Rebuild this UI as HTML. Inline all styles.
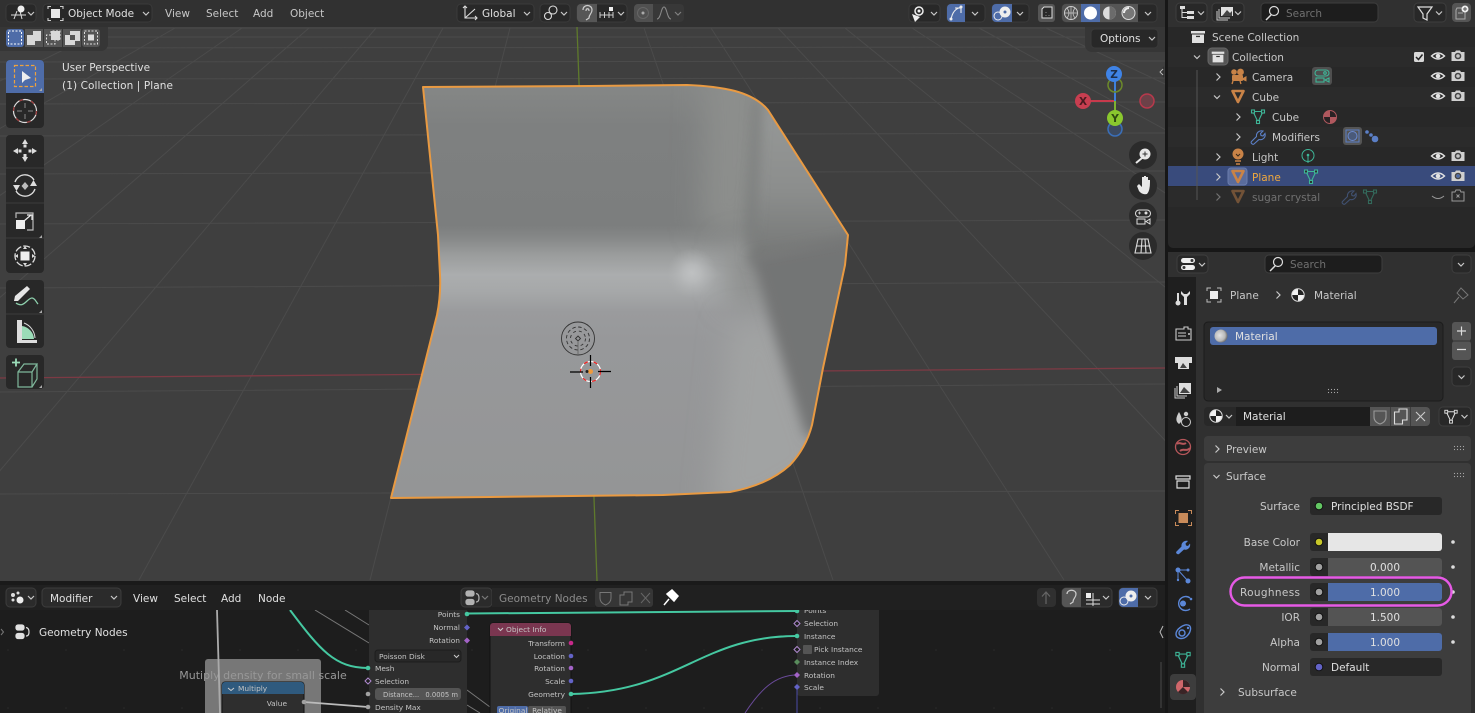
<!DOCTYPE html>
<html><head><meta charset="utf-8"><title>Blender</title>
<style>
html,body{margin:0;padding:0;background:#171717;width:1475px;height:713px;overflow:hidden}
svg{display:block}
text{font-family:"DejaVu Sans","Liberation Sans",sans-serif;font-size:10.5px;fill:#c8c8c8}
.w{fill:#e0e0e0}.d{fill:#8c8c8c}.r{text-anchor:end}.c{text-anchor:middle}
.n{font-size:7.4px;fill:#c4c4c4}
.chev{fill:none;stroke:#c8c8c8;stroke-width:1.2}
</style></head><body>
<svg width="1475" height="713" viewBox="0 0 1475 713" xmlns="http://www.w3.org/2000/svg">
<defs>
<clipPath id="vp"><rect x="0" y="0" width="1165" height="581"/></clipPath>
<clipPath id="ne"><rect x="0" y="610" width="1165" height="103"/></clipPath>
<clipPath id="pl"><path id="plp" d="M423,87 L590,86 L687,85 Q715,86 735,91 Q757,97 768,110 L848,235 L845,265 L823,368 L812,425 Q806,448 790,465 Q768,485 730,492 L663,495 L490,497 L391,498 L437,315 Q441,295 440,275 L438,235 Z"/></clipPath>
<linearGradient id="base" x1="0" y1="86" x2="0" y2="497" gradientUnits="userSpaceOnUse">
<stop offset="0" stop-color="#858786"/><stop offset=".1" stop-color="#7e8080"/><stop offset=".34" stop-color="#7c7e7e"/><stop offset=".37" stop-color="#868888"/><stop offset=".41" stop-color="#9a9c9c"/><stop offset=".46" stop-color="#abadae"/><stop offset=".5" stop-color="#a6a8a9"/><stop offset=".55" stop-color="#9a9b9d"/><stop offset=".62" stop-color="#97989a"/><stop offset="1" stop-color="#949596"/>
</linearGradient>
<linearGradient id="upr" x1="0" y1="105" x2="0" y2="258" gradientUnits="userSpaceOnUse">
<stop offset="0" stop-color="#969897"/><stop offset=".55" stop-color="#8c8e8d"/><stop offset="1" stop-color="#757776"/>
</linearGradient>
<radialGradient id="hl"><stop offset="0" stop-color="#bfc1c2"/><stop offset=".35" stop-color="#bcbebf" stop-opacity=".75"/><stop offset="1" stop-color="#b0b2b3" stop-opacity="0"/></radialGradient>
<filter id="b3" filterUnits="userSpaceOnUse" x="300" y="0" width="700" height="600"><feGaussianBlur stdDeviation="6"/></filter>
<filter id="b6" filterUnits="userSpaceOnUse" x="300" y="0" width="700" height="600"><feGaussianBlur stdDeviation="14"/></filter>
<pattern id="dots" width="58" height="58" patternUnits="userSpaceOnUse" x="6" y="10"><circle cx="2" cy="2" r=".8" fill="#2a2a2a"/></pattern>

<g id="eye"><path d="M-6.5,0Q0,-6 6.5,0Q0,6 -6.5,0Z" fill="none" stroke="#e2e2e2" stroke-width="1.4"/><circle r="2.3" fill="#e2e2e2"/></g>
<g id="cam"><path d="M-6.5,-4H-3L-2,-5.5H2L3,-4H6.5V5H-6.5Z" fill="#d0d0d0"/><circle r="3.3" fill="#444"/><circle r="1.8" fill="#c4c4c4"/></g>
<g id="obj"><path d="M-5.5,-5H5.5L0,6Z" fill="none" stroke="#c98347" stroke-width="2.6" stroke-linejoin="round"/></g>
<g id="mesh" fill="none" stroke="#3eb597" stroke-width="1.1"><path d="M-5,-4.5H5L0,6Z"/><rect x="-6.5" y="-6" width="3" height="3" fill="#282828"/><rect x="3.5" y="-6" width="3" height="3" fill="#282828"/><rect x="-1.5" y="4.500" width="3" height="3" fill="#282828"/></g>
<path id="wrp" d="M-6.5,4.500L-1.500,-.5C-2,-4 1,-7 5,-6L2.500,-3.500L3,-1.500L5,-1L7,-3.500C8,.5 4.500,3.500 1,2.500L-4,7C-5,8 -8,6 -6.500,4.500Z"/>
<g id="wr"><use href="#wrp" fill="none" stroke="#5b7fc6" stroke-width="1.100"/></g>
<g id="mat"><circle r="6.2" fill="#f0f0f0"/><path d="M0,0V-6.2A6.2,6.2 0 0 1 6.2,0ZM0,0V6.2A6.2,6.2 0 0 1 -6.2,0Z" fill="#222"/><circle r="6.2" fill="none" stroke="#ddd"/></g>
<g id="box"><path d="M-7,-6H7V-3.500H-7ZM-6,-2.500H6V6H-6Z" fill="#e0e0e0"/><rect x="-2" y="-1.200" width="4" height="1.300" fill="#333"/></g>
<g id="gn" fill="none" stroke="#e0e0e0" stroke-width="1.2"><rect x="-6" y="-7" width="8" height="5" rx="2" fill="#e0e0e0"/><rect x="-6" y="1.500" width="8" height="5" rx="2" fill="#e0e0e0"/><path d="M4,-4.500Q7,-4 7,0Q7,4 4,4"/></g>
<path id="cd" d="M-3,-1.500L0,1.500L3,-1.500" class="chev"/>
<path id="cr" d="M-1.500,-3.500L2,0L-1.500,3.500" class="chev"/>
<g id="ddots" fill="#aaa"><circle cx="-4.500" cy="-1.500" r=".6"/><circle cx="-1.500" cy="-1.500" r=".6"/><circle cx="1.500" cy="-1.500" r=".6"/><circle cx="4.500" cy="-1.500" r=".6"/><circle cx="-4.500" cy="1.500" r=".6"/><circle cx="-1.500" cy="1.500" r=".6"/><circle cx="1.500" cy="1.500" r=".6"/><circle cx="4.500" cy="1.500" r=".6"/></g>
<radialGradient id="sph" cx=".4" cy=".45" r=".6"><stop offset="0" stop-color="#e4e4e4"/><stop offset=".7" stop-color="#b8b8b8"/><stop offset="1" stop-color="#6a6a6a"/></radialGradient>
</defs>

<!-- ============ VIEWPORT ============ -->
<rect x="0" y="0" width="1165" height="581" fill="#3f3f3f"/>
<g clip-path="url(#vp)">
<g stroke="#4b4b4b" stroke-width="1" fill="none">
<path d="M0,28H1165M0,37H1165M0,48L1165,47M0,62L1165,61M0,79L1165,78M0,104L1165,102M0,136L1165,133M0,174L1165,171M0,224L1165,220M0,288L1165,282M0,392L1165,384M0,494L1165,491"/>
<path d="M-227,28L-2175,580M-160,28L-1944,580M-93,28L-1712,580M-26,28L-1481,580M41,28L-1250,580M108,28L-1018,580M175,28L-787,580M242,28L-556,580M309,28L-324,580M376,28L-93,580M443,28L139,580M510,28L370,580M644,28L833,580M711,28L1064,580M778,28L1296,580M845,28L1527,580M912,28L1759,580M979,28L1990,580M1046,28L2221,580M1113,28L2453,580M1180,28L2684,580M1247,28L2916,580M1314,28L3147,580"/>
</g>
<path d="M0,378L1165,368" stroke="#7d3a44" stroke-width="1.3" fill="none"/>
<path d="M577,27L597,581" stroke="#5f7a2c" stroke-width="1.3" fill="none"/>
</g>

<!-- mesh -->
<g clip-path="url(#pl)">
<rect x="380" y="80" width="480" height="425" fill="url(#base)"/>
<polygon points="705,60 790,60 752,235 700,232" fill="#8c8e8c" filter="url(#b6)"/>
<polygon points="725,245 770,240 770,320 725,300" fill="#8e908f" filter="url(#b6)"/>
<polygon points="730,320 780,320 830,470 760,510 710,510" fill="#a1a3a3" filter="url(#b6)"/>
<polygon points="760,95 900,240 748,262" fill="url(#upr)" filter="url(#b3)"/>
<path d="M757,100L750,245" stroke="#797b7a" stroke-width="7" filter="url(#b3)" fill="none"/>
<polygon points="750,256 900,228 870,440 806,436" fill="#737574" filter="url(#b3)"/>
<circle cx="692" cy="273" r="25" fill="url(#hl)"/>
</g>
<path d="M423,87 L590,86 L687,85 Q715,86 735,91 Q757,97 768,110 L848,235 L845,265 L823,368 L812,425 Q806,448 790,465 Q768,485 730,492 L663,495 L490,497 L391,498 L437,315 Q441,295 440,275 L438,235 Z" fill="none" stroke="#e99a42" stroke-width="2" stroke-linejoin="round"/>

<!-- light & cursor -->
<g fill="none" stroke="#333" stroke-width=".9">
<circle cx="578" cy="338.500" r="16.500"/>
<circle cx="578" cy="338.500" r="11.500" stroke-dasharray="3.500 2.500"/>
<circle cx="578" cy="338.500" r="7.500" stroke-dasharray="3 3"/>
<path d="M578,336L580.500,338.500L578,341L575.500,338.500Z"/>
<path d="M578,341V354" stroke="#666"/>
</g>
<g fill="none">
<circle cx="590.500" cy="371.500" r="10" stroke="#fff" stroke-width="1.2"/>
<circle cx="590.500" cy="371.500" r="10" stroke="#e22" stroke-width="1.2" stroke-dasharray="4 6"/>
<path d="M570,372H583M598,371.500H611M590.500,355V366M590.500,377V388" stroke="#000" stroke-width="1.2"/>
</g>
<circle cx="590.500" cy="371.500" r="2.500" fill="#ef9a3c"/>
<circle cx="587" cy="371.500" r="1.500" fill="#222"/>

<!-- top bar -->
<rect x="0" y="0" width="1165" height="27" fill="#313131"/>
<g fill="#282828" stroke="#3a3a3a">
<rect x="6" y="4" width="30" height="18" rx="4"/>
<rect x="43" y="4" width="109" height="18" rx="4"/>
<rect x="457" y="4" width="77" height="18" rx="4"/>
<rect x="540" y="4" width="30" height="18" rx="4"/>
<rect x="577" y="4" width="50" height="18" rx="4"/>
<rect x="909" y="4" width="31" height="18" rx="4"/>
<rect x="947" y="4" width="38" height="18" rx="4"/>
<rect x="992" y="4" width="37" height="18" rx="4"/>
<rect x="1062" y="4" width="95" height="18" rx="4"/>
</g>
<rect x="634" y="4" width="50" height="18" rx="4" fill="#383838"/>
<!-- editor type icon -->
<g fill="none" stroke="#ddd"><path d="M11,15H26M14,19L17,11M22,19L20,11"/></g><circle cx="21" cy="9" r="3.500" fill="#eee"/>
<use href="#cd" x="31" y="13.500"/>
<!-- mode icon -->
<rect x="51" y="9" width="9" height="9" fill="#e8e8e8"/><path d="M48,9V6.500H51M60,6.500H63V9M63,18V20.500H60M51,20.500H48V18" fill="none" stroke="#ccc" stroke-width="1.1"/>
<text x="68" y="17" class="w">Object Mode</text><use href="#cd" x="146" y="13.500"/>
<text x="165" y="17">View</text><text x="206" y="17">Select</text><text x="253" y="17">Add</text><text x="290" y="17">Object</text>
<!-- global -->
<g fill="none" stroke="#ddd" stroke-width="1.1"><path d="M465,6V18H477M465,18L475,9M463,8L465,6L467,8M475,16L477,18L475,20"/></g>
<text x="482" y="17" class="w">Global</text><use href="#cd" x="527" y="13.500"/>
<g fill="none" stroke="#ddd" stroke-width="1.1"><circle cx="548" cy="16" r="3.500"/><circle cx="553" cy="10" r="4"/></g><use href="#cd" x="564" y="13.500"/>
<path d="M577,8a4,4 0 0 1 4,-4H597V22H581a4,4 0 0 1 -4,-4Z" fill="#565656"/>
<path d="M583,10C583,4 592,4 592,10C592,14 589,14 589,18L586,20M586,11C586,8 589,8 589,11" fill="none" stroke="#ccc" stroke-width="1.2"/>
<path d="M600,15H613M600,12V18M604.500,12V18M609,12V18M613,12V18" stroke="#ccc" fill="none"/><rect x="609" y="7" width="4" height="4" fill="#eee"/>
<use href="#cd" x="621" y="13.500"/>
<path d="M634,8a4,4 0 0 1 4,-4H653V22H638a4,4 0 0 1 -4,-4Z" fill="#505050"/>
<circle cx="643" cy="13" r="5.500" fill="none" stroke="#666"/><circle cx="643" cy="13" r="1.500" fill="#aaa"/>
<path d="M657,19C661,19 661,7 664,7C667,7 667,19 671,19" fill="none" stroke="#8a8a8a"/><use href="#cd" x="678" y="13.500" opacity=".5"/>
<!-- right header -->
<circle cx="919" cy="11" r="4" fill="none" stroke="#eee" stroke-width="1.5"/><circle cx="919" cy="11" r="1.500" fill="#eee"/><path d="M912,14L920,17L915,22Z" fill="#eee"/><use href="#cd" x="934" y="13.500"/>
<path d="M947,8a4,4 0 0 1 4,-4H965V22H951a4,4 0 0 1 -4,-4Z" fill="#4e6ca8"/>
<path d="M951,20C952,12 956,8 962,7M955,8H961V13" fill="none" stroke="#eee" stroke-width="1.1"/><circle cx="951" cy="19" r="1.500" fill="#eee"/><circle cx="961" cy="7" r="1.500" fill="#eee"/><use href="#cd" x="975" y="13.500"/>
<path d="M992,8a4,4 0 0 1 4,-4H1012V22H996a4,4 0 0 1 -4,-4Z" fill="#4e6ca8"/>
<circle cx="1005" cy="12" r="5.500" fill="#eee"/><circle cx="998" cy="16" r="4" fill="none" stroke="#eee"/><circle cx="1005" cy="12" r="1.500" fill="#4e6ca8"/><use href="#cd" x="1020" y="13.500"/>
<rect x="1038" y="4" width="17" height="18" rx="3" fill="#555"/><path d="M1044,7H1052V18H1042V9Z" fill="#2a2a2a" stroke="#ddd"/><path d="M1046,12v.5M1046,15v.5M1049,15v.5" stroke="#eee"/>
<path d="M1062,8a4,4 0 0 1 4,-4H1081V22H1066a4,4 0 0 1 -4,-4Z" fill="#505050"/>
<rect x="1081" y="4" width="19" height="18" fill="#4e6ca8"/>
<rect x="1100" y="4" width="19" height="18" fill="#555"/><rect x="1119" y="4" width="19" height="18" fill="#555"/>
<circle cx="1071" cy="13" r="6.500" fill="none" stroke="#ccc"/><path d="M1064.500,13H1077.500M1071,6.500V19.500M1067,8Q1071,13 1067,18M1075,8Q1071,13 1075,18" stroke="#ccc" fill="none" stroke-width=".7"/>
<circle cx="1090.500" cy="13" r="6.500" fill="#fff"/>
<circle cx="1109.500" cy="13" r="6.500" fill="#ddd"/><path d="M1109.500,13V6.500A6.500,6.500 0 0 1 1116,13A6.500,6.500 0 0 1 1109.500,19.500Z" fill="#6b6b6b"/>
<circle cx="1128.500" cy="13" r="6.500" fill="#777" stroke="#ddd"/><path d="M1124,13a5,5 0 0 1 5,-5" stroke="#eee" fill="none" stroke-width="2"/>
<use href="#cd" x="1148" y="13.500"/>

<!-- select mode strip -->
<path d="M0,27H108V44a7,7 0 0 1 -7,7H0Z" fill="#363636"/>
<rect x="6" y="29" width="18" height="18" rx="3" fill="#4e6ca8"/><rect x="25" y="29" width="18" height="18" fill="#555"/><rect x="44" y="29" width="18" height="18" fill="#555"/><rect x="63" y="29" width="18" height="18" fill="#555"/><rect x="82" y="29" width="18" height="18" rx="3" fill="#555"/>
<rect x="8.500" y="31" width="13" height="13" fill="none" stroke="#fff" stroke-dasharray="2 1.500"/>
<path d="M27,35H33V31H41V41H35V45H27Z" fill="#d8d8d8"/>
<path d="M51,35H46.500V44H55V40H60V31H51Z" fill="none" stroke="#e0e0e0" stroke-dasharray="2 1.500"/><rect x="51" y="31" width="9" height="9" fill="#d8d8d8"/>
<path d="M65,35H70V31H80V41H75V45H65Z" fill="#d8d8d8"/><rect x="70" y="35" width="5" height="5" fill="#555"/>
<rect x="84.500" y="31" width="13" height="13" fill="none" stroke="#ddd" stroke-dasharray="2 1.500"/><rect x="88" y="34.500" width="6" height="6" fill="#ddd"/>

<!-- options -->
<path d="M1085,27H1165V52H1092a7,7 0 0 1 -7,-7Z" fill="#363636"/>
<rect x="1091" y="29" width="67" height="19" rx="4" fill="#282828" stroke="#3a3a3a"/>
<text x="1100" y="42" class="w">Options</text><use href="#cd" x="1152" y="38.500"/>

<!-- overlay text -->
<text x="62" y="71" class="w">User Perspective</text>
<text x="62" y="89" class="w" textLength="111">(1) Collection | Plane</text>

<!-- toolbar -->
<rect x="6" y="60" width="38" height="68" rx="4" fill="#282828"/>
<path d="M6,93V64a4,4 0 0 1 4,-4H40a4,4 0 0 1 4,4V93Z" fill="#4e6ca8"/>
<rect x="6" y="135" width="38" height="138" rx="4" fill="#282828"/>
<rect x="6" y="280" width="38" height="68" rx="4" fill="#282828"/>
<rect x="6" y="355" width="38" height="34" rx="4" fill="#282828"/>
<path d="M6,168H44M6,203H44M6,238H44M6,314H44" stroke="#3d3d3d"/>
<path d="M44,89V92H41Z M44,236V239H41Z M44,311V314H41Z M44,386V389H41Z" fill="#aaa" transform="translate(-2,-1)"/>
<rect x="14.500" y="65.500" width="21" height="21" fill="none" stroke="#eda23f" stroke-width="1.200" stroke-dasharray="3.500 2"/>
<path d="M22,71V83L25,80L31,78Z" fill="#eee"/>
<circle cx="25" cy="111" r="11.500" fill="none" stroke="#ddd" stroke-width="1.200"/><circle cx="25" cy="111" r="11.500" fill="none" stroke="#9c3a3a" stroke-width="1.200" stroke-dasharray="4 8"/>
<path d="M25,103V108M25,114V119M17,111H22M28,111H33" stroke="#888" fill="none"/>
<g fill="#ddd"><path d="M25,139L28,144H22ZM25,162L28,157H22ZM13,151L18,148V154ZM37,151L32,148V154Z"/><rect x="23.500" y="144.500" width="3" height="3"/><rect x="23.500" y="154" width="3" height="3"/><rect x="18.500" y="149.500" width="3" height="3"/><rect x="28.500" y="149.500" width="3" height="3"/></g>
<path d="M15,182A10.500,10.500 0 0 1 34,180M35,189A10.500,10.500 0 0 1 16,191" fill="none" stroke="#ddd" stroke-width="1.300"/><path d="M13,185H20L16.500,191ZM30,186H37L33.500,180Z" fill="#ddd"/><path d="M25,182L28.500,186L25,190L21.500,186Z" fill="#bbb"/>
<rect x="16" y="220" width="9" height="9" fill="#eee"/><path d="M16,218V213H33V230H27" fill="none" stroke="#bbb" stroke-width="1.200"/><path d="M24,221L31,215M27,215H32V220" fill="none" stroke="#eee" stroke-width="1.200"/>
<circle cx="25" cy="256" r="10" fill="none" stroke="#ddd" stroke-width="1.300" stroke-dasharray="7 2"/><rect x="20.500" y="251.500" width="9" height="9" fill="#eee"/><path d="M25,246L27,249H23ZM25,266L27,263H23ZM15,256L18,254V258ZM35,256L32,254V258Z" fill="#ddd"/>
<path d="M14,301L15,296L27,286L30,289L18,301Z" fill="#e6e6e6"/><path d="M16,303C24,309 27,298 32,298C35,298 36,302 38,304" fill="none" stroke="#8ed0ad" stroke-width="1.300"/>
<path d="M17,320H22V340H37V343H17Z" fill="#ddd"/><path d="M22,326A14,14 0 0 1 34,339H22Z" fill="#9bdcb8"/><path d="M24,323A17,17 0 0 1 35,338" fill="none" stroke="#ddd"/>
<path d="M18,372H32V387H18ZM18,372L24,364H37L32,372M37,364V379L32,387" fill="none" stroke="#7fb79b" stroke-width="1.200"/>
<path d="M12,362.500H20M16,358.500V366.500" stroke="#9bdcb8" stroke-width="1.800" fill="none"/>

<!-- gizmo -->
<path d="M1115,101H1087" stroke="#c83a4c" stroke-width="2"/><path d="M1115,101V78" stroke="#3f7fdc" stroke-width="2"/><path d="M1115,101V112" stroke="#7fb22f" stroke-width="2"/>
<circle cx="1115" cy="85" r="7" fill="none" stroke="#6c8a2a" stroke-width="1.500"/>
<circle cx="1115" cy="129" r="7" fill="#3c4a60" stroke="#3a6fb9" stroke-width="1.500"/>
<circle cx="1147" cy="101" r="7" fill="#6c4148" stroke="#b8394c" stroke-width="1.500"/>
<circle cx="1114" cy="74" r="8" fill="#3f83e6"/><circle cx="1083" cy="101" r="8" fill="#c83e50"/><circle cx="1115" cy="118" r="8" fill="#8ac82e"/>
<text x="1114" y="78" class="c" style="fill:#1c2e4c;font-weight:bold">Z</text><text x="1083" y="105" class="c" style="fill:#4a1a20;font-weight:bold">X</text><text x="1115" y="122" class="c" style="fill:#2e4a10;font-weight:bold">Y</text>
<!-- nav btns -->
<g fill="#2b2b2b"><circle cx="1143" cy="155" r="14"/><circle cx="1143" cy="186" r="14"/><circle cx="1143" cy="216" r="14"/><circle cx="1143" cy="246" r="14"/></g>
<circle cx="1145" cy="154" r="5.500" fill="#e8e8e8"/><path d="M1142,158L1136,163" stroke="#e8e8e8" stroke-width="2"/><path d="M1142.500,154H1147.500M1145,151.500V156.500" stroke="#333"/>
<path d="M1137,186L1139,191Q1142,195 1147,194Q1150,191 1150,182V180H1148V186V177H1146V185V176H1144V185V177H1142V187L1139,184Z" fill="#e8e8e8"/>
<rect x="1135.500" y="210" width="15" height="7" rx="3.500" fill="none" stroke="#ddd"/><circle cx="1146" cy="213" r="1.500" fill="#ddd"/><path d="M1138,213H1141M1139.500,211.500V214.500" stroke="#ddd" stroke-width=".8"/><rect x="1137" y="219" width="8" height="5" fill="none" stroke="#ddd"/><path d="M1146,221.500L1150,219V224Z" fill="none" stroke="#ddd"/>
<path d="M1138,239H1148L1151,253H1135ZM1136.500,246H1149.500M1142,239L1141,253M1145,239L1146,253" fill="none" stroke="#ddd" stroke-width="1.100"/>
<path d="M1164,66L1159,72L1164,78Z" fill="#333"/><path d="M1163,69L1160,72L1163,75" fill="none" stroke="#bbb"/>

<!-- ============ SEPARATOR ============ -->
<rect x="0" y="581" width="1165" height="4" fill="#1a1a1a"/>

<!-- ============ NODE EDITOR ============ -->
<rect x="0" y="585" width="1165" height="128" fill="#1d1d1d"/>
<rect x="0" y="610" width="1165" height="103" fill="url(#dots)"/>
<rect x="0" y="585" width="1165" height="25" fill="#202020"/>
<g clip-path="url(#ne)">
<!-- frame -->
<rect x="205" y="659" width="116" height="60" rx="3" fill="#777"/>
<text x="263" y="679" class="c" style="font-size:11px;fill:#989898">Mutiply density for small scale</text>
<!-- faint wires -->
<path d="M315,610L369,643M345,610L369,625M467,705L480,713M467,690L490,707" stroke="#777" fill="none"/>
<path d="M217,610L220,713" stroke="#aaa" stroke-width="1.800" fill="none"/>
<!-- multiply -->
<rect x="222" y="682" width="82" height="40" rx="3" fill="#2e2e2e" stroke="#111"/>
<path d="M222,685a3,3 0 0 1 3,-3H301a3,3 0 0 1 3,3V694H222Z" fill="#2f5a7e"/>
<path d="M228,688L231,690.500L234,688" fill="none" stroke="#ccc"/><text x="238" y="691" class="n">Multiply</text>
<text x="287" y="706" class="n r">Value</text>
<path d="M304,702L368,707" stroke="#bbb" stroke-width="1.800"/><circle cx="304" cy="702" r="2.300" fill="#a1a1a1"/>
<path d="M290,610C320,650 335,668 368,668" stroke="#45c8a1" stroke-width="2" fill="none"/>
<!-- distribute node -->
<rect x="369" y="600" width="98" height="120" rx="3" fill="#2e2e2e"/>
<text x="460" y="617" class="n r">Points</text><text x="460" y="630" class="n r">Normal</text><text x="460" y="643" class="n r">Rotation</text>
<rect x="375" y="650" width="86" height="12" rx="3" fill="#282828" stroke="#1d1d1d"/><text x="379" y="659" class="n">Poisson Disk</text><path d="M454,655L456.500,657.500L459,655" fill="none" stroke="#ccc"/>
<text x="375" y="671" class="n">Mesh</text><text x="375" y="684" class="n">Selection</text>
<rect x="375" y="688" width="86" height="12" rx="3" fill="#545454"/><text x="383" y="697" class="n" style="font-size:6.800px">Distance...</text><text x="458" y="697" class="n r" style="font-size:6.800px">0.0005 m</text>
<text x="375" y="710" class="n">Density Max</text>
<path d="M467,613.500C600,612.500 700,611.500 797,611" stroke="#45c8a1" stroke-width="2" fill="none"/>
<circle cx="467" cy="614" r="2.300" fill="#45c8a1"/><path d="M467,624.500L470,627.500L467,630.500L464,627.500Z" fill="#6363c7"/><path d="M467,637.500L470,640.500L467,643.500L464,640.500Z" fill="#a363c7"/>
<circle cx="368" cy="668" r="2.300" fill="#45c8a1"/><path d="M368,678L371,681L368,684L365,681Z" fill="#1d1d1d" stroke="#b08ad0"/><circle cx="368" cy="694" r="2.300" fill="#a1a1a1"/><circle cx="368" cy="707" r="2.300" fill="#a1a1a1"/>
<!-- object info -->
<rect x="490" y="623" width="81" height="95" rx="3" fill="#2e2e2e" stroke="#111"/>
<path d="M490,626a3,3 0 0 1 3,-3H568a3,3 0 0 1 3,3V636H490Z" fill="#7a3650"/>
<path d="M498,628L500.500,630.500L503,628" fill="none" stroke="#ccc"/><text x="506" y="632" class="n">Object Info</text>
<text x="565" y="646" class="n r">Transform</text><text x="565" y="659" class="n r">Location</text><text x="565" y="671" class="n r">Rotation</text><text x="565" y="684" class="n r">Scale</text><text x="565" y="697" class="n r">Geometry</text>
<circle cx="571" cy="643" r="2.300" fill="#c7298a"/><circle cx="571" cy="656" r="2.300" fill="#6363c7"/><circle cx="571" cy="668" r="2.300" fill="#a363c7"/><circle cx="571" cy="681" r="2.300" fill="#6363c7"/>
<path d="M571,694C680,692 700,636 797,636" stroke="#45c8a1" stroke-width="2" fill="none"/><circle cx="571" cy="694" r="2.300" fill="#45c8a1"/>
<rect x="497" y="706" width="31" height="12" rx="2" fill="#4e6ca8"/><rect x="528" y="706" width="38" height="12" rx="2" fill="#545454"/>
<text x="513" y="713" class="n c">Original</text><text x="547" y="713" class="n c">Relative</text>
<!-- instance node -->
<rect x="797" y="600" width="82" height="96" rx="3" fill="#2e2e2e"/>
<text x="804" y="613" class="n">Points</text><text x="804" y="626" class="n">Selection</text><text x="804" y="639" class="n">Instance</text>
<rect x="803" y="645" width="9" height="9" rx="1" fill="#545454"/><text x="814" y="652" class="n">Pick Instance</text>
<text x="804" y="665" class="n">Instance Index</text><text x="804" y="678" class="n">Rotation</text><text x="804" y="690" class="n">Scale</text>
<path d="M797,675C775,675 760,690 745,713" stroke="#6a4a9a" fill="none"/><path d="M797,687V713" stroke="#4a4aa8" fill="none"/>
<circle cx="797" cy="611" r="2.300" fill="#45c8a1"/><path d="M797,620.500L800,623.500L797,626.500L794,623.500Z" fill="#1d1d1d" stroke="#b08ad0"/><circle cx="797" cy="636" r="2.300" fill="#45c8a1"/><path d="M797,646.500L800,649.500L797,652.500L794,649.500Z" fill="#1d1d1d" stroke="#b08ad0"/><path d="M797,659L800,662L797,665L794,662Z" fill="#598c5c"/><path d="M797,672L800,675L797,678L794,675Z" fill="#a363c7"/><path d="M797,684L800,687L797,690L794,687Z" fill="#6363c7"/>
</g>
<rect x="1160" y="662" width="2" height="46" fill="#333"/>
<path d="M1163,626L1160,632L1163,638" fill="none" stroke="#bbb"/>
<path d="M1,629L3.500,632L1,635" fill="none" stroke="#777"/>
<use href="#gn" x="22" y="632"/>
<text x="39" y="636" class="w">Geometry Nodes</text>

<!-- node header -->
<g fill="#2b2b2b" stroke="#3d3d3d">
<rect x="6" y="588" width="30" height="19" rx="4"/>
<rect x="42" y="588" width="79" height="19" rx="4"/>
<rect x="461" y="588" width="31" height="19" rx="4"/>
<rect x="1062" y="588" width="50" height="19" rx="4"/>
<rect x="1119" y="588" width="38" height="19" rx="4"/>
</g>
<circle cx="13" cy="595" r="2" fill="#ddd"/><circle cx="18" cy="593" r="1.500" fill="#ddd"/><circle cx="20" cy="600" r="3.500" fill="#eee"/><circle cx="13" cy="600" r="1.500" fill="#ddd"/><use href="#cd" x="31" y="597.500"/>
<text x="50" y="602" class="w">Modifier</text><use href="#cd" x="114" y="597.500"/>
<text x="133" y="602" class="w">View</text><text x="174" y="602" class="w">Select</text><text x="221" y="602" class="w">Add</text><text x="258" y="602" class="w">Node</text>
<use href="#gn" x="472" y="598" opacity=".75"/><use href="#cd" x="485" y="597.500" opacity=".5"/>
<rect x="492" y="588" width="103" height="19" fill="#262626"/><text x="499" y="602" class="d">Geometry Nodes</text>
<rect x="595" y="588" width="58" height="19" rx="3" fill="#363636"/>
<path d="M600,592.500H611V598C611,602 608,604 605.500,605C603,604 600,602 600,598Z" fill="none" stroke="#777"/>
<path d="M620,595H624V592H632V602H628V605H620Z" fill="none" stroke="#777"/>
<path d="M641,593L650,603M650,593L641,603" stroke="#666"/>
<path d="M664,605L669,599M667,594L672,590L678,596L674,601Z" fill="#fff" stroke="#fff" stroke-width="1.500"/>
<rect x="1037" y="588" width="19" height="19" rx="4" fill="#303030"/><path d="M1046,604V593M1042,596.500L1046,592L1050,596.500" fill="none" stroke="#666" stroke-width="1.200"/>
<path d="M1062,592a4,4 0 0 1 4,-4H1081V607H1066a4,4 0 0 1 -4,-4Z" fill="#565656"/>
<path d="M1067,594C1067,589 1076,589 1076,594C1076,598 1073,598 1073,602L1070,604" fill="none" stroke="#ccc" stroke-width="1.200"/>
<path d="M1086,600H1100M1093,593V606M1086,604H1100" stroke="#ddd" fill="none"/><rect x="1086" y="593" width="5" height="5" fill="#eee"/><use href="#cd" x="1106" y="597.500"/>
<path d="M1119,592a4,4 0 0 1 4,-4H1138V607H1123a4,4 0 0 1 -4,-4Z" fill="#4e6ca8"/>
<circle cx="1131" cy="596" r="5.500" fill="#eee"/><circle cx="1124" cy="601" r="4" fill="none" stroke="#eee"/><circle cx="1131" cy="596" r="1.500" fill="#4e6ca8"/><use href="#cd" x="1148" y="597.500"/>

<!-- ============ OUTLINER ============ -->
<rect x="1165" y="0" width="310" height="713" fill="#171717"/>
<path d="M1168,0H1475V243a5,5 0 0 1 -5,5H1173a5,5 0 0 1 -5,-5Z" fill="#282828"/>
<rect x="1168" y="0" width="307" height="27" fill="#303030"/>
<g fill="#2b2b2b"><rect x="1168" y="47" width="307" height="20"/><rect x="1168" y="87" width="307" height="20"/><rect x="1168" y="127" width="307" height="20"/><rect x="1168" y="187" width="307" height="20"/></g>
<rect x="1168" y="166" width="307" height="20" fill="#394b7c"/>
<g fill="#282828" stroke="#3e3e3e"><rect x="1176" y="3" width="31" height="19" rx="4"/><rect x="1212" y="3" width="32" height="19" rx="4"/><rect x="1414" y="3" width="32" height="19" rx="4"/></g>
<rect x="1261" y="3" width="117" height="19" rx="4" fill="#1d1d1d" stroke="#3e3e3e"/>
<rect x="1452" y="3" width="19" height="19" rx="4" fill="#555"/>
<g fill="#ddd"><rect x="1180" y="6" width="5" height="3"/><rect x="1187" y="11" width="7" height="3"/><rect x="1187" y="16" width="7" height="3"/></g><path d="M1182,9V17.500H1187M1182,12.500H1187" stroke="#ddd" fill="none"/><use href="#cd" x="1201" y="13"/>
<rect x="1221" y="7" width="12" height="9" fill="#e0e0e0"/><path d="M1223,15L1227,10L1230,13L1232,11V16H1222Z" fill="#444"/><path d="M1219,9V18H1230M1217,11V20H1228" stroke="#ccc" fill="none"/><use href="#cd" x="1238" y="13"/>
<circle cx="1274" cy="11" r="4.500" fill="none" stroke="#ddd" stroke-width="1.200"/><path d="M1271,15L1266,20" stroke="#ddd" stroke-width="1.500"/>
<text x="1286" y="17" class="d" style="fill:#707070">Search</text>
<path d="M1418,7H1432L1427,14V20L1423,18V14Z" fill="none" stroke="#ddd" stroke-width="1.200"/><use href="#cd" x="1439" y="13"/>
<path d="M1457,8H1465V19H1456V10Z" fill="none" stroke="#aaa"/><path d="M1458,13H1463" stroke="#aaa"/><circle cx="1465" cy="9" r="3.500" fill="#eee"/><path d="M1463,9H1467M1465,7V11" stroke="#555"/>

<use href="#box" x="1198" y="37"/>
<text x="1212" y="41">Scene Collection</text>
<use href="#cd" x="1197" y="57"/>
<rect x="1208" y="48" width="20" height="17" rx="4" fill="#555" stroke="#666"/>
<use href="#box" x="1218" y="57" transform="translate(121.800,5.700) scale(.9)" />
<text x="1232" y="61">Collection</text>
<path d="M1197,70V200" stroke="#555"/>
<rect x="1414" y="52" width="10" height="10" rx="1.500" fill="#d8d8d8"/><path d="M1416,57L1418.500,59.500L1422.500,54.500" fill="none" stroke="#222" stroke-width="1.500"/>
<use href="#cr" x="1218" y="77"/>
<g fill="#c98347"><circle cx="1234" cy="72" r="2.800"/><circle cx="1240.500" cy="72" r="3.400"/><rect x="1232" y="75" width="11" height="6" rx="1"/><path d="M1243,78L1246.500,76V81.500L1243,80Z"/></g><path d="M1233,81L1232,84M1240,81L1241,84" stroke="#c98347" stroke-width="1.300"/>
<text x="1252" y="81">Camera</text>
<rect x="1312" y="67" width="20" height="18" rx="3" fill="#4f4f4f"/>
<g fill="none" stroke="#3eb597" stroke-width="1.100"><rect x="1315" y="70" width="14" height="6" rx="3"/><circle cx="1325" cy="73" r="1.300"/><rect x="1316" y="78" width="8" height="4"/><path d="M1325,80L1329,78V82Z"/></g>
<use href="#cd" x="1217" y="97"/><use href="#obj" x="1238" y="96"/>
<text x="1252" y="101">Cube</text>
<use href="#cr" x="1238" y="117"/><use href="#mesh" x="1258" y="116"/>
<text x="1272" y="121">Cube</text>
<circle cx="1330" cy="117" r="6.500" fill="#b0585e"/><path d="M1330,117V110.500A6.500,6.500 0 0 1 1336.500,117ZM1330,117V123.500A6.500,6.500 0 0 1 1323.500,117Z" fill="#2a2224"/><circle cx="1330" cy="117" r="6.500" fill="none" stroke="#b0585e"/>
<use href="#cr" x="1238" y="137"/><use href="#wr" x="1258" y="137"/>
<text x="1272" y="141">Modifiers</text>
<rect x="1343" y="127" width="19" height="18" rx="3" fill="#555"/><rect x="1346" y="130" width="13" height="12" fill="none" stroke="#5b7fc6"/><circle cx="1352.500" cy="136" r="4.500" fill="#4a5a7a" stroke="#6a8ad0"/>
<g fill="#5b7fc6"><circle cx="1367" cy="132" r="1.800"/><circle cx="1371" cy="135" r="1.800"/><circle cx="1375" cy="139" r="3.300"/></g>
<use href="#cr" x="1218" y="157"/>
<circle cx="1238" cy="154" r="5.500" fill="#c98347"/><path d="M1235,161H1241M1236,164H1240" stroke="#c98347" stroke-width="1.500"/><path d="M1236,154L1238,156L1240,154" stroke="#3a2a1a" fill="none"/>
<text x="1252" y="161">Light</text>
<circle cx="1308" cy="155.500" r="6" fill="none" stroke="#3eb597"/><circle cx="1308" cy="155" r="1.300" fill="#3eb597"/><path d="M1308,156V163" stroke="#3eb597"/>
<use href="#cr" x="1218" y="177"/>
<rect x="1228" y="168" width="19" height="17" rx="3" fill="#5a6c9c" stroke="#6a7cac"/><use href="#obj" x="1238" y="176"/>
<text x="1252" y="181" style="fill:#f0a83e">Plane</text>
<use href="#mesh" x="1311" y="176"/>
<g opacity=".45"><use href="#cr" x="1218" y="197"/><use href="#obj" x="1238" y="196"/><use href="#wr" x="1349" y="197"/><use href="#mesh" x="1370" y="196"/></g>
<text x="1252" y="201" style="fill:#717171">sugar crystal</text>
<use href="#eye" x="1438" y="56"/><use href="#cam" x="1458" y="56"/>
<use href="#eye" x="1438" y="76"/><use href="#cam" x="1458" y="76"/>
<use href="#eye" x="1438" y="96"/><use href="#cam" x="1458" y="96"/>
<use href="#eye" x="1438" y="156"/><use href="#cam" x="1458" y="156"/>
<use href="#eye" x="1438" y="176"/><use href="#cam" x="1458" y="176"/>
<circle cx="1458" cy="176" r="1.800" fill="#4e6ca8"/>
<path d="M1432,196Q1438,201 1444,196" fill="none" stroke="#999"/>
<path d="M1452,192H1455L1456,190H1460L1461,192H1464V201H1452Z" fill="none" stroke="#999"/><path d="M1456.500,194.500L1459.500,197.500M1459.500,194.500L1456.500,197.500" stroke="#999"/>

<!-- ============ PROPERTIES ============ -->
<path d="M1168,252H1475V713H1168Z" fill="#303030"/>
<rect x="1168" y="277" width="28" height="436" fill="#1f1f1f"/>
<g fill="#282828" stroke="#3e3e3e"><rect x="1177" y="255" width="31" height="18" rx="4"/><rect x="1452" y="255" width="19" height="18" rx="4"/></g>
<rect x="1265" y="255" width="117" height="18" rx="4" fill="#1d1d1d" stroke="#3e3e3e"/>
<rect x="1181" y="258" width="14" height="5" rx="2.500" fill="#eee"/><rect x="1181" y="265" width="14" height="5" rx="2.500" fill="#eee"/><circle cx="1192" cy="260.500" r="1.500" fill="#333"/><circle cx="1184" cy="267.500" r="1.500" fill="#333"/><use href="#cd" x="1202" y="264.500"/>
<circle cx="1278" cy="262" r="4.500" fill="none" stroke="#ddd" stroke-width="1.200"/><path d="M1275,266L1270,271" stroke="#ddd" stroke-width="1.500"/>
<text x="1290" y="268" style="fill:#707070">Search</text>
<use href="#cd" x="1461" y="264.500"/>
<!-- breadcrumb -->
<rect x="1210" y="291" width="8" height="8" fill="#eee"/><path d="M1207,291V288H1211M1217,288H1221V291M1221,299V302H1217M1211,302H1207V299" fill="none" stroke="#bbb"/>
<text x="1230" y="299">Plane</text><use href="#cr" x="1278" y="295"/><use href="#mat" x="1298" y="295"/>
<text x="1314" y="299">Material</text>
<path d="M1454,303L1459,297M1457,293L1461,288L1468,295L1463,299Z" fill="none" stroke="#777"/>
<!-- list -->
<rect x="1204" y="322" width="239" height="79" rx="4" fill="#282828" stroke="#1c1c1c"/>
<rect x="1210" y="327" width="227" height="18" rx="3" fill="#4e6ca8"/>
<circle cx="1221" cy="336" r="6.500" fill="url(#sph)"/>
<text x="1235" y="340" class="w">Material</text>
<path d="M1217,387V393L1222,390Z" fill="#aaa"/><use href="#ddots" x="1333" y="391"/>
<rect x="1452" y="322" width="19" height="19" rx="3" fill="#555"/><rect x="1452" y="341" width="19" height="19" rx="3" fill="#555"/>
<path d="M1457,331H1466M1461.500,326.500V335.500M1457,349.500H1466" stroke="#ddd" stroke-width="1.200" fill="none"/>
<path d="M1452,341H1471" stroke="#333"/>
<rect x="1452" y="367" width="19" height="19" rx="4" fill="#282828" stroke="#3e3e3e"/><use href="#cd" x="1461.500" y="377"/>
<!-- material selector -->
<path d="M1208,407H1236V426H1208a4,4 0 0 1 -4,-4V411a4,4 0 0 1 4,-4Z" fill="#282828"/>
<use href="#mat" x="1216" y="416"/><use href="#cd" x="1229" y="416.500"/>
<rect x="1236" y="407" width="134" height="19" fill="#1d1d1d"/>
<text x="1243" y="420" class="w">Material</text>
<path d="M1370,407H1426a4,4 0 0 1 4,4V422a4,4 0 0 1 -4,4H1370Z" fill="#555"/><path d="M1390.500,407V426M1410.500,407V426" stroke="#3d3d3d"/>
<path d="M1374,411H1386V417C1386,421 1383,423 1380,424C1377,423 1374,421 1374,417Z" fill="none" stroke="#999" stroke-width="1.100"/>
<path d="M1394.500,412H1399V409H1407V420H1402.500V424H1394.500Z" fill="none" stroke="#ddd" stroke-width="1.100"/>
<path d="M1416,412L1425,421M1425,412L1416,421" stroke="#ccc" stroke-width="1.100"/>
<rect x="1439" y="407" width="32" height="19" rx="4" fill="#282828" stroke="#3e3e3e"/>
<g transform="translate(1451,416) scale(.95)"><path d="M-5,-4.500H5L0,6Z" fill="none" stroke="#ddd" stroke-width="1.100"/><rect x="-6.500" y="-6" width="3" height="3" fill="#282828" stroke="#ddd"/><rect x="3.500" y="-6" width="3" height="3" fill="#282828" stroke="#ddd"/><rect x="-1.500" y="4.500" width="3" height="3" fill="#282828" stroke="#ddd"/></g>
<use href="#cd" x="1464.500" y="416.500"/>
<!-- panels -->
<rect x="1204" y="436" width="267" height="25" rx="4" fill="#3d3d3d"/>
<path d="M1204,467a4,4 0 0 1 4,-4H1467a4,4 0 0 1 4,4V713H1204Z" fill="#3d3d3d"/>
<use href="#cr" x="1217" y="449"/><text x="1226" y="453">Preview</text><use href="#ddots" x="1459" y="448"/>
<use href="#cd" x="1216.500" y="476.500"/><text x="1226" y="480">Surface</text><use href="#ddots" x="1459" y="475"/>

<text x="1300" y="510" class="r">Surface</text>
<text x="1300" y="546" class="r">Base Color</text>
<text x="1300" y="571" class="r">Metallic</text>
<text x="1300" y="596" class="r" textLength="60">Roughness</text>
<text x="1300" y="621" class="r">IOR</text>
<text x="1300" y="646" class="r">Alpha</text>
<text x="1300" y="671" class="r">Normal</text>
<rect x="1310" y="497" width="132" height="18" rx="3" fill="#282828"/>
<rect x="1310" y="533" width="132" height="18" rx="3" fill="#282828"/><path d="M1328,533H1439a3,3 0 0 1 3,3V548a3,3 0 0 1 -3,3H1328Z" fill="#e6e6e6"/>
<rect x="1310" y="558" width="132" height="18" rx="3" fill="#282828"/><path d="M1328,558H1439a3,3 0 0 1 3,3V573a3,3 0 0 1 -3,3H1328Z" fill="#545454"/>
<rect x="1310" y="583" width="132" height="18" rx="3" fill="#282828"/><path d="M1328,583H1439a3,3 0 0 1 3,3V598a3,3 0 0 1 -3,3H1328Z" fill="#4e6ca8"/>
<rect x="1310" y="608" width="132" height="18" rx="3" fill="#282828"/><path d="M1328,608H1439a3,3 0 0 1 3,3V623a3,3 0 0 1 -3,3H1328Z" fill="#545454"/>
<rect x="1310" y="633" width="132" height="18" rx="3" fill="#282828"/><path d="M1328,633H1439a3,3 0 0 1 3,3V648a3,3 0 0 1 -3,3H1328Z" fill="#4e6ca8"/>
<rect x="1310" y="658" width="132" height="18" rx="3" fill="#282828"/>
<g stroke="#111"><circle cx="1319" cy="506" r="3.800" fill="#63c763"/><circle cx="1319" cy="542" r="3.800" fill="#c7c729"/><circle cx="1319" cy="567" r="3.800" fill="#a1a1a1"/><circle cx="1319" cy="592" r="3.800" fill="#a1a1a1"/><circle cx="1319" cy="617" r="3.800" fill="#a1a1a1"/><circle cx="1319" cy="642" r="3.800" fill="#a1a1a1"/><circle cx="1319" cy="667" r="3.800" fill="#6363c7"/></g>
<text x="1331" y="510" class="w">Principled BSDF</text>
<text x="1385" y="571" class="w c">0.000</text><text x="1385" y="596" class="w c">1.000</text><text x="1385" y="621" class="w c">1.500</text><text x="1385" y="646" class="w c">1.000</text>
<text x="1331" y="671" class="w">Default</text>
<g fill="#ddd"><circle cx="1453" cy="542" r="1.800"/><circle cx="1453" cy="567" r="1.800"/><circle cx="1453" cy="592" r="1.800"/><circle cx="1453" cy="617" r="1.800"/><circle cx="1453" cy="642" r="1.800"/></g>
<use href="#cr" x="1222" y="692"/><text x="1238" y="696">Subsurface</text>
<rect x="1230.500" y="577.500" width="221" height="28" rx="14" fill="none" stroke="#e65ae6" stroke-width="2.400"/>

<!-- nav icons -->
<rect x="1170" y="674" width="26" height="26" rx="4" fill="#3d3d3d"/>
<g fill="#ddd"><circle cx="1178" cy="303" r="2.500"/><rect x="1177" y="293" width="2" height="8"/><path d="M1184,297V305H1187V297L1190,294V291L1187,294H1184L1181,291V294Z"/></g>
<path d="M1176,329H1184V327H1188V329H1191V340H1176Z" fill="none" stroke="#ccc" stroke-width="1.100"/><path d="M1178,333H1186M1178,336H1186" stroke="#ccc"/><circle cx="1189" cy="334" r="1" fill="#ccc"/>
<path d="M1175,357H1192V363H1189V369H1178V363H1175Z" fill="#ddd"/><path d="M1180,368L1183,363L1187,368Z" fill="#444"/>
<rect x="1179" y="383" width="12" height="11" fill="#ddd"/><path d="M1180,393L1184,387L1190,393Z" fill="#444"/><path d="M1177,386V396H1187M1175,388V398H1185" fill="none" stroke="#ccc"/>
<path d="M1179,412C1176,417 1175,421 1179,424C1183,421 1182,417 1179,412Z" fill="#ccc"/><circle cx="1186" cy="414" r="2.200" fill="#ccc"/><circle cx="1186" cy="422" r="4.500" fill="none" stroke="#ccc"/>
<circle cx="1183" cy="447" r="7.500" fill="#1f1f1f"/><path d="M1177,444C1180,441 1182,446 1186,443M1180,451C1183,448 1187,452 1190,448" stroke="#b5565a" stroke-width="2" fill="none"/><circle cx="1183" cy="447" r="7.500" fill="none" stroke="#b5565a" stroke-width="1.300"/>
<path d="M1176,476H1190V479H1176ZM1177,481H1189V488H1177Z" fill="none" stroke="#ddd" stroke-width="1.200"/>
<rect x="1178.500" y="513" width="9.500" height="10" fill="#c98b5a"/><path d="M1175.500,514V510.500H1179M1188,510.500H1191.500V514M1191.500,522V525.500H1188M1179,525.500H1175.500V522" fill="none" stroke="#c98b5a"/>
<use href="#wrp" x="1183" y="547" fill="#5b87d8"/>
<g fill="#5b87d8"><circle cx="1178" cy="570" r="2.500"/><circle cx="1188" cy="570" r="1.500"/><circle cx="1178" cy="580" r="1.200"/><circle cx="1188" cy="581" r="2.500"/></g><path d="M1178,570H1187M1178,570V579M1178,570L1188,581" stroke="#5b87d8" fill="none"/>
<path d="M1190,598A7,7 0 1 0 1190,609" fill="none" stroke="#5b87d8" stroke-width="1.400"/><circle cx="1183" cy="603.500" r="3" fill="#5b87d8"/><circle cx="1191" cy="599" r="1.300" fill="#5b87d8"/>
<path d="M1176,634C1176,629 1184,624 1188,625C1192,626 1191,632 1187,636C1183,640 1176,639 1176,634Z" fill="none" stroke="#5b87d8" stroke-width="1.400"/><circle cx="1182" cy="633" r="3" fill="none" stroke="#5b87d8" stroke-width="1.400"/><circle cx="1188" cy="628" r="1.200" fill="#5b87d8"/>
<g transform="translate(1183,659) scale(1.100)"><path d="M-5,-4.500H5L0,6Z" fill="none" stroke="#3eb597" stroke-width="1.100"/><rect x="-6.500" y="-6" width="3" height="3" fill="#1f1f1f" stroke="#3eb597"/><rect x="3.500" y="-6" width="3" height="3" fill="#1f1f1f" stroke="#3eb597"/><rect x="-1.500" y="4.500" width="3" height="3" fill="#1f1f1f" stroke="#3eb597"/></g>
<g transform="translate(1183,687)"><circle r="7" fill="#d0666a"/><path d="M0,0V-7A7,7 0 0 1 7,0ZM0,0L5,5A7,7 0 0 1 -5,5Z" fill="#3a2426"/></g>
</svg>
</body></html>
